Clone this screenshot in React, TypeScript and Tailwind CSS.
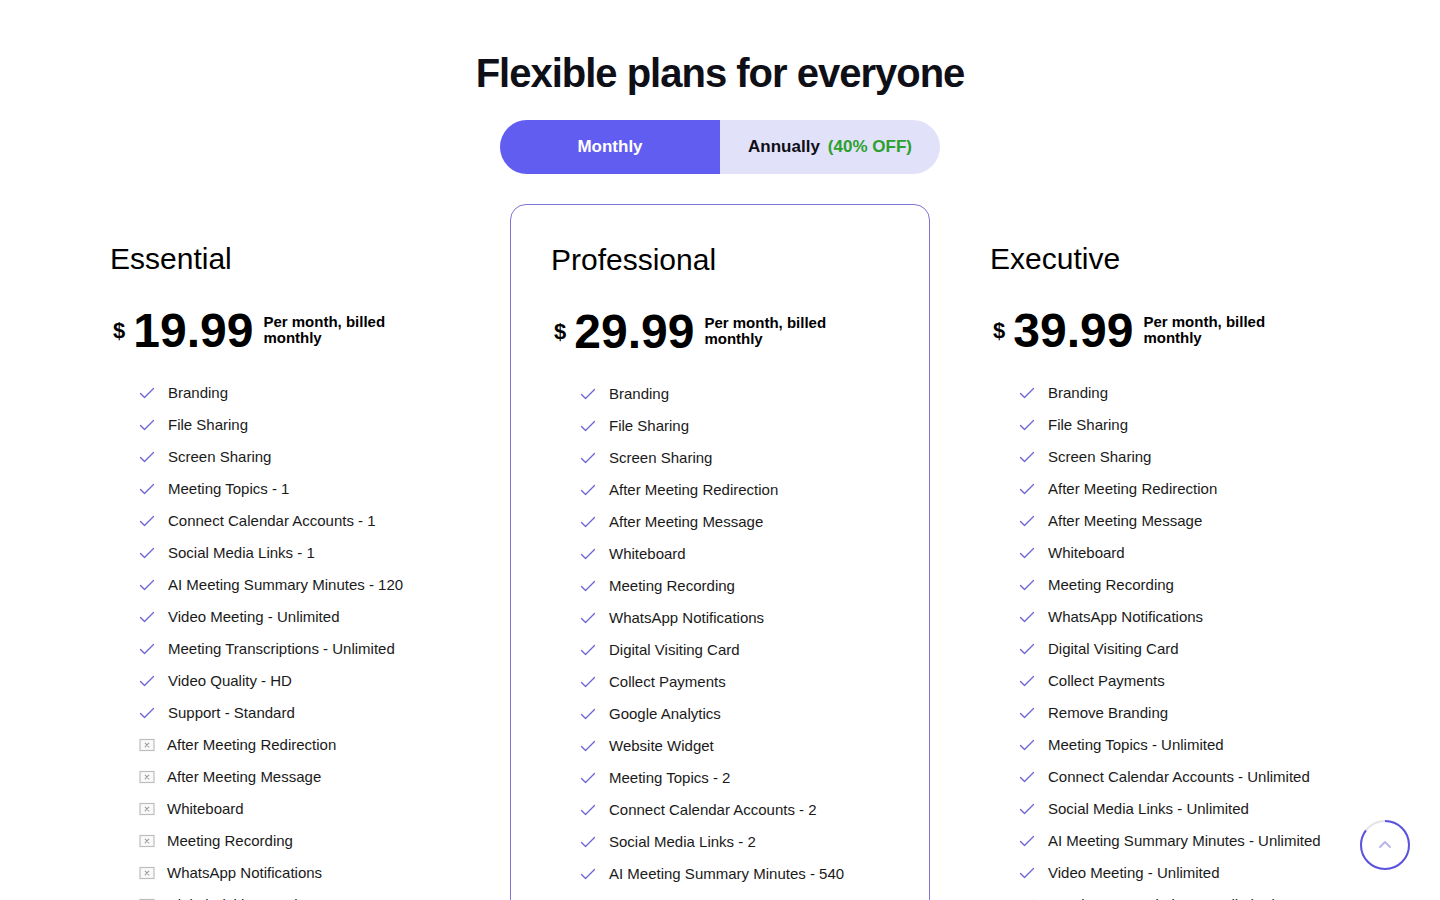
import { useState } from 'react';

type Feature = { label: string; included: boolean };

const common = ['Branding', 'File Sharing', 'Screen Sharing'];

const plans: { name: string; price: string; highlight?: boolean; features: Feature[] }[] = [
  {
    name: 'Essential',
    price: '19.99',
    features: [
      ...common.map((label) => ({ label, included: true })),
      ...[
        'Meeting Topics - 1',
        'Connect Calendar Accounts - 1',
        'Social Media Links - 1',
        'AI Meeting Summary Minutes - 120',
        'Video Meeting - Unlimited',
        'Meeting Transcriptions - Unlimited',
        'Video Quality - HD',
        'Support - Standard',
      ].map((label) => ({ label, included: true })),
      ...[
        'After Meeting Redirection',
        'After Meeting Message',
        'Whiteboard',
        'Meeting Recording',
        'WhatsApp Notifications',
        'Digital Visiting Card',
        'Collect Payments',
        'Google Analytics',
        'Website Widget',
      ].map((label) => ({ label, included: false })),
    ],
  },
  {
    name: 'Professional',
    price: '29.99',
    highlight: true,
    features: [
      ...common,
      'After Meeting Redirection',
      'After Meeting Message',
      'Whiteboard',
      'Meeting Recording',
      'WhatsApp Notifications',
      'Digital Visiting Card',
      'Collect Payments',
      'Google Analytics',
      'Website Widget',
      'Meeting Topics - 2',
      'Connect Calendar Accounts - 2',
      'Social Media Links - 2',
      'AI Meeting Summary Minutes - 540',
      'Video Meeting - Unlimited',
      'Meeting Transcriptions - Unlimited',
    ].map((label) => ({ label, included: true })),
  },
  {
    name: 'Executive',
    price: '39.99',
    features: [
      ...common,
      'After Meeting Redirection',
      'After Meeting Message',
      'Whiteboard',
      'Meeting Recording',
      'WhatsApp Notifications',
      'Digital Visiting Card',
      'Collect Payments',
      'Remove Branding',
      'Meeting Topics - Unlimited',
      'Connect Calendar Accounts - Unlimited',
      'Social Media Links - Unlimited',
      'AI Meeting Summary Minutes - Unlimited',
      'Video Meeting - Unlimited',
      'Meeting Transcriptions - Unlimited',
      'Video Quality - Full HD',
    ].map((label) => ({ label, included: true })),
  },
];

const CheckIcon = () => (
  <svg width="16" height="16" viewBox="0 0 16 16" fill="none" className="shrink-0">
    <path d="M1.5 8.5 L5.5 12.5 L14.5 3.5" stroke="#6c63d9" strokeWidth="1.3" strokeLinecap="round" strokeLinejoin="round" />
  </svg>
);

const CrossIcon = () => (
  <svg width="16" height="16" viewBox="0 0 16 16" fill="none" className="shrink-0">
    <rect x="1" y="2.5" width="14" height="11" stroke="#bdbdbd" strokeWidth="1.2" fill="#fafafa" />
    <path d="M6.2 6.2 L9.8 9.8 M9.8 6.2 L6.2 9.8" stroke="#9a9a9a" strokeWidth="1.1" strokeLinecap="round" />
  </svg>
);

const PlanCard = ({ plan }: { plan: (typeof plans)[number] }) => (
  <div
    className={`rounded-2xl p-10 ${plan.highlight ? 'border border-[#7d74d8]' : ''}`}
  >
    <h2 className="text-[30px] leading-[30px] text-black">{plan.name}</h2>
    <div className="flex items-center mt-[33px] h-12">
      <span className="text-[22px] font-bold text-black ml-[3px] mt-[-2px]">$</span>
      <span className="text-[48px] leading-none font-bold text-black ml-[8px]">{plan.price}</span>
      <span className="ml-[10px] text-[15px] leading-[16px] font-bold text-black -mt-[3px]">
        Per month, billed
        <br />
        monthly
      </span>
    </div>
    <ul className="mt-[22px] pl-[29px]">
      {plan.features.map((f) => (
        <li key={f.label} className="flex items-center h-8 text-[15px] text-[#1a1a1a]">
          {f.included ? <CheckIcon /> : <CrossIcon />}
          <span className={f.included ? 'ml-[13px]' : 'ml-[12px]'}>{f.label}</span>
        </li>
      ))}
    </ul>
  </div>
);

export default function App() {
  const [billing, setBilling] = useState<'monthly' | 'annually'>('monthly');

  return (
    <div
      className="relative h-[900px] overflow-hidden bg-white"
      style={{ fontFamily: '"Liberation Sans", Arial, sans-serif' }}
    >
      <div className="pt-[50px] flex flex-col items-center">
        <h1 className="text-[40px] leading-[46px] font-bold tracking-[-1px] text-[#0f0f17]">
          Flexible plans for everyone
        </h1>
        <div className="mt-[24px] flex w-[440px] h-[54px] rounded-full overflow-hidden bg-[#e2e1fa]">
          <button
            onClick={() => setBilling('monthly')}
            className={`w-1/2 text-[17px] font-bold ${billing === 'monthly' ? 'bg-[#625df1] text-white' : 'text-[#0f0f17]'}`}
          >
            Monthly
          </button>
          <button
            onClick={() => setBilling('annually')}
            className={`w-1/2 flex items-center justify-center gap-2 text-[17px] font-bold ${billing === 'annually' ? 'bg-[#625df1] text-white' : 'text-[#0f0f17]'}`}
          >
            <span>Annually</span>
            <span className="text-[#2ca02c]">(40% OFF)</span>
          </button>
        </div>
      </div>

      <div className="mx-auto mt-[30px] w-[1300px] grid grid-cols-3 gap-5">
        {plans.map((p) => (
          <PlanCard key={p.name} plan={p} />
        ))}
      </div>

      <button className="absolute left-[1360px] top-[820px] w-[50px] h-[50px] flex items-center justify-center">
        <svg width="50" height="50" viewBox="0 0 50 50" className="absolute inset-0">
          <circle cx="25" cy="25" r="24" fill="white" stroke="#e3e3e8" strokeWidth="2" />
          <circle
            cx="25"
            cy="25"
            r="24"
            fill="none"
            stroke="#5a52e0"
            strokeWidth="2"
            strokeDasharray="128 151"
            transform="rotate(-90 25 25)"
          />
        </svg>
        <svg width="16" height="16" viewBox="0 0 16 16" fill="none" className="relative">
          <path d="M3 10 L8 5 L13 10" stroke="#b9b5ef" strokeWidth="2" strokeLinecap="round" strokeLinejoin="round" />
        </svg>
      </button>
    </div>
  );
}
